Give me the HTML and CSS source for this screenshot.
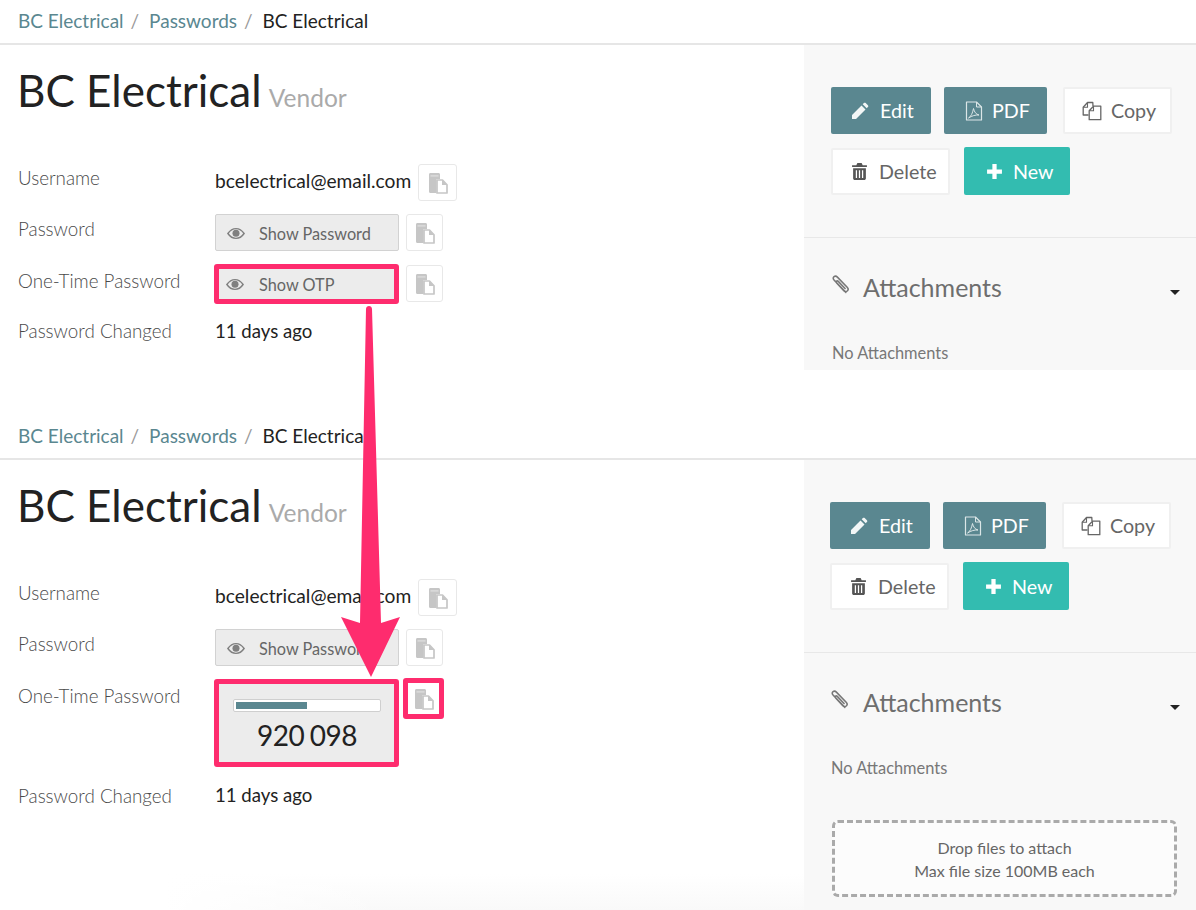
FILE: index.html
```html
<!DOCTYPE html>
<html lang="en">
<head>
<meta charset="utf-8">
<title>BC Electrical</title>
<link rel="stylesheet" href="styles.css">
</head>
<body>
<svg class="defs" width="0" height="0" aria-hidden="true">
  <symbol id="i-copydoc" viewBox="0 0 20 22">
    <path fill="#c6c6c6" d="M1 2.500c0-.8.6-1.500 1.400-1.500h8.200c.8 0 1.400.7 1.400 1.500V7H8.500v14H2.400C1.600 21 1 20.300 1 19.500z"/>
    <path fill="#dcdcdc" d="M2.500 3.200h8v1.400h-8z"/>
    <path fill="#fff" stroke="#c6c6c6" stroke-width="1.700" stroke-linejoin="round" d="M9 8h5.500l4.500 4.800V21H9z"/>
    <path fill="#c6c6c6" d="M14 8l5 5h-5z"/>
  </symbol>
  <symbol id="i-eye" viewBox="0 0 20 14">
    <path fill="none" stroke="#808080" stroke-width="1.600" d="M1 7c2.500-3.600 5.500-5.400 9-5.400S16.500 3.400 19 7c-2.500 3.600-5.500 5.400-9 5.400S3.500 10.600 1 7z"/>
    <circle cx="10" cy="6.600" r="3.900" fill="#808080"/>
  </symbol>
  <symbol id="i-pencil" viewBox="0 0 18 18">
    <path fill="#f2f6f6" d="M1 13l9.500-9.500 4 4L5 17H1zM11.700 2.300l1.200-1.200c.5-.5 1.300-.5 1.800 0l2.200 2.200c.5.500.5 1.300 0 1.800l-1.200 1.200z"/>
  </symbol>
  <symbol id="i-pdf" viewBox="0 0 18 20">
    <path fill="none" stroke="#dbe6e7" stroke-width="1.200" stroke-linejoin="round" d="M1.500 1h10l5 5v13h-15z"/>
    <path fill="none" stroke="#dbe6e7" stroke-width="1" d="M11.500 1v5h5M3.500 17c2.500-1.500 4-4.500 5-9.500.8 3.500 2.500 5.800 5.500 6.500-3.500-.3-7 .8-10.500 3z"/>
  </symbol>
  <symbol id="i-copy" viewBox="0 0 20 20">
    <path fill="none" stroke="#666" stroke-width="1.300" stroke-linejoin="round" d="M6.500 14H1.200V6.200L5.500 1.500h5.300L11 5"/>
    <path fill="#fff" stroke="#666" stroke-width="1.300" stroke-linejoin="round" d="M7.200 18.700V9.800L11.500 5.200h7.300v13.500z"/>
    <path fill="none" stroke="#666" stroke-width="1.100" d="M5.500 1.500v4.700H1.200M11.500 5.200v4.600H7.200"/>
  </symbol>
  <symbol id="i-trash" viewBox="0 0 14 16">
    <path fill="#555" d="M5 0h4l1 2h4v1.800H0V2h4zM1 5h12v9.500c0 .8-.7 1.500-1.500 1.500h-9C1.700 16 1 15.300 1 14.500zm2.500 1.800v7.400h1.200V6.800zm2.900 0v7.400h1.200V6.800zm2.900 0v7.400h1.200V6.800z"/>
  </symbol>
  <symbol id="i-plus" viewBox="0 0 16 16">
    <path fill="#fff" d="M6 1h4v5h5v4h-5v5H6v-5H1V6h5z"/>
  </symbol>
  <symbol id="i-clip" viewBox="0 0 18 19">
    <path fill="none" stroke="#777" stroke-width="1.500" stroke-linecap="round" d="M15 16.500L4 5c-1.500-1.500-1-2.800-.2-3.400.9-.7 2.100-.7 3.200.4l9.300 9.600c1 1 1.200 2.300.3 3.300-1 1-2.400 1-3.500-.1L6.300 7.600c-.6-.6-.6-1.300-.1-1.700.4-.4 1-.4 1.600.2l6.500 6.700"/>
  </symbol>
</svg>

<section class="shot shot-first">
  <nav class="crumbs">
    <a class="crumb-link">BC Electrical</a><span class="crumb-sep">/</span>
    <a class="crumb-link">Passwords</a><span class="crumb-sep">/</span>
    <span class="crumb-here">BC Electrical</span>
  </nav>
  <div class="shot-body">
    <main class="main">
      <h1 class="title">BC Electrical <small class="title-sub">Vendor</small></h1>
      <div class="field field-user">
        <div class="label">Username</div>
        <div class="value value-email">bcelectrical@email.com</div>
        <button class="copy copy-wide"><svg class="ic-doc"><use href="#i-copydoc"/></svg></button>
      </div>
      <div class="field">
        <div class="label">Password</div>
        <button class="reveal"><svg class="ic-eye"><use href="#i-eye"/></svg><span>Show Password</span></button>
        <button class="copy"><svg class="ic-doc"><use href="#i-copydoc"/></svg></button>
      </div>
      <div class="field">
        <div class="label label-otp">One-Time Password</div>
        <button class="reveal reveal-hl"><svg class="ic-eye"><use href="#i-eye"/></svg><span>Show OTP</span></button>
        <button class="copy"><svg class="ic-doc"><use href="#i-copydoc"/></svg></button>
      </div>
      <div class="field field-last">
        <div class="label">Password Changed</div>
        <div class="value">11 days ago</div>
      </div>
    </main>
    <aside class="side">
      <div class="actions">
        <div class="btn-row">
          <button class="btn btn-teal btn-edit"><svg class="ic-btn"><use href="#i-pencil"/></svg>Edit</button>
          <button class="btn btn-teal btn-pdf"><svg class="ic-btn"><use href="#i-pdf"/></svg>PDF</button>
          <button class="btn btn-white btn-copy"><svg class="ic-btn"><use href="#i-copy"/></svg>Copy</button>
        </div>
        <div class="btn-row">
          <button class="btn btn-white btn-del"><svg class="ic-btn ic-trash"><use href="#i-trash"/></svg>Delete</button>
          <button class="btn btn-new"><svg class="ic-btn ic-plus"><use href="#i-plus"/></svg>New</button>
        </div>
      </div>
      <div class="attach">
        <div class="attach-head">
          <svg class="ic-clip"><use href="#i-clip"/></svg>
          <h2 class="attach-title">Attachments</h2>
          <span class="caret"></span>
        </div>
        <p class="attach-none">No Attachments</p>
      </div>
    </aside>
  </div>
</section>

<section class="shot shot-second">
  <nav class="crumbs">
    <a class="crumb-link">BC Electrical</a><span class="crumb-sep">/</span>
    <a class="crumb-link">Passwords</a><span class="crumb-sep">/</span>
    <span class="crumb-here">BC Electrical</span>
  </nav>
  <div class="shot-body">
    <main class="main">
      <h1 class="title">BC Electrical <small class="title-sub">Vendor</small></h1>
      <div class="field field-user">
        <div class="label">Username</div>
        <div class="value value-email">bcelectrical@email.com</div>
        <button class="copy copy-wide"><svg class="ic-doc"><use href="#i-copydoc"/></svg></button>
      </div>
      <div class="field">
        <div class="label">Password</div>
        <button class="reveal"><svg class="ic-eye"><use href="#i-eye"/></svg><span>Show Password</span></button>
        <button class="copy"><svg class="ic-doc"><use href="#i-copydoc"/></svg></button>
      </div>
      <div class="field field-otp">
        <div class="label label-otp">One-Time Password</div>
        <div class="otp">
          <div class="otp-track"><div class="otp-fill" style="width:50%"></div></div>
          <div class="otp-code">920 098</div>
        </div>
        <button class="copy copy-hl"><svg class="ic-doc"><use href="#i-copydoc"/></svg></button>
      </div>
      <div class="field field-last">
        <div class="label">Password Changed</div>
        <div class="value">11 days ago</div>
      </div>
    </main>
    <aside class="side">
      <div class="actions">
        <div class="btn-row">
          <button class="btn btn-teal btn-edit"><svg class="ic-btn"><use href="#i-pencil"/></svg>Edit</button>
          <button class="btn btn-teal btn-pdf"><svg class="ic-btn"><use href="#i-pdf"/></svg>PDF</button>
          <button class="btn btn-white btn-copy"><svg class="ic-btn"><use href="#i-copy"/></svg>Copy</button>
        </div>
        <div class="btn-row">
          <button class="btn btn-white btn-del"><svg class="ic-btn ic-trash"><use href="#i-trash"/></svg>Delete</button>
          <button class="btn btn-new"><svg class="ic-btn ic-plus"><use href="#i-plus"/></svg>New</button>
        </div>
      </div>
      <div class="attach">
        <div class="attach-head">
          <svg class="ic-clip"><use href="#i-clip"/></svg>
          <h2 class="attach-title">Attachments</h2>
          <span class="caret"></span>
        </div>
        <p class="attach-none">No Attachments</p>
        <div class="drop">Drop files to attach<br>Max file size 100MB each</div>
      </div>
    </aside>
  </div>
</section>

<svg class="arrow" width="1196" height="910" viewBox="0 0 1196 910" aria-hidden="true">
  <path fill="#fe2c6e" d="M366 309c0-4 6-4 6 0L381 623L400 617L371 677L341 617L360 623z"/>
</svg>
</body>
</html>
```

FILE: styles.css
```css
* { box-sizing: border-box; }
html, body { margin: 0; padding: 0; }
body {
  position: relative;
  width: 1196px;
  height: 910px;
  overflow: hidden;
  background: #fff;
  font-family: "Lato", "Liberation Sans", sans-serif;
  color: #222;
}
.defs { position: absolute; }
.shot { display: flex; flex-direction: column; }
.shot-first { height: 370px; }
.shot-second { height: 495px; margin-top: 45px; }

.crumbs {
  flex: none;
  height: 45px;
  padding: 9px 0 0 18px;
  border-bottom: 2px solid #e6e6e6;
  font-size: 19px;
  line-height: 24px;
  white-space: nowrap;
}
.crumb-link { color: #5a8790; }
.crumb-sep { color: #999; margin: 0 5px 0 7px; }
.crumb-here { color: #222; }

.shot-body { flex: 1; display: flex; min-height: 0; }
.main { flex: 1; padding: 0 0 0 18px; min-width: 0; }
.shot-second .main {
  background:
    linear-gradient(to right, #fff, rgba(255, 255, 255, 0) 35%) right bottom / 640px 36px no-repeat,
    linear-gradient(to bottom, #fff, #f9f9f9) right bottom / 640px 36px no-repeat;
}
.title {
  margin: 0 0 0 -1px;
  padding-top: 16px;
  height: 119px;
  font-size: 44px;
  line-height: 58px;
  font-weight: 400;
  color: #222;
  white-space: nowrap;
}
.title-sub { font-size: 24.5px; color: #aaa; font-weight: 400; margin-left: -4px; }

.field { display: flex; align-items: flex-start; height: 37px; margin-bottom: 14px; }
.field-user { height: 37px; margin-bottom: 13px; }
.field-otp { height: 93px; margin-bottom: 5px; margin-top: -1px; }
.field-last { height: 30px; margin-bottom: 0; }
.label {
  flex: none;
  width: 197px;
  font-size: 18.800px;
  line-height: 24px;
  color: #4a4a4a;
  font-weight: 300;
  padding-top: 3px;
  white-space: nowrap;
}
.field-user > .label { padding-top: 2px; }
.label-otp { padding-top: 4px; }
.field-otp > .label-otp { padding-top: 5px; }
.value { font-size: 18.600px; line-height: 24px; color: #222; padding-top: 3px; white-space: nowrap; }
.value-email { font-size: 19.200px; padding-top: 5px; }
.field-otp + .field-last > .label { padding-top: 7px; }
.field-otp + .field-last > .value { padding-top: 6px; }

.copy {
  width: 37px;
  height: 37px;
  margin-left: 7px;
  padding: 0;
  background: #fff;
  border: 1px solid #e8e8e8;
  border-radius: 3px;
  display: flex;
  align-items: center;
  justify-content: center;
  flex: none;
}
.copy-wide { width: 39px; margin-left: 7px; }
.copy-hl {
  width: 41px;
  height: 41px;
  margin-left: 4px;
  margin-top: -1px;
  border: 5px solid #fe2c6e;
}
.ic-doc { width: 20px; height: 22px; }

.reveal {
  flex: none;
  width: 184px;
  height: 37px;
  padding: 1px 0 0 11px;
  display: flex;
  align-items: center;
  background: #ececec;
  border: 1px solid #d2d2d2;
  border-radius: 2px;
  font-family: inherit;
  font-size: 16.300px;
  color: #666;
  text-align: left;
}
.ic-eye { width: 18px; height: 13px; margin-right: 14px; flex: none; }
.reveal-hl {
  width: 185px;
  height: 40px;
  margin-left: -1px;
  margin-top: -1px;
  padding: 0 0 0 7px;
  border: 5px solid #fe2c6e;
  border-radius: 3px;
}
.reveal-hl .ic-eye { margin-right: 15px; }
.reveal-hl + .copy { margin-left: 7px; }

.otp {
  flex: none;
  width: 185px;
  height: 88px;
  margin-left: -1px;
  padding: 15px 13px 0 14px;
  background: #ececec;
  border: 5px solid #fe2c6e;
  border-radius: 3px;
  text-align: center;
}
.otp-track {
  height: 13px;
  padding: 2px;
  background: #fff;
  border: 1px solid #cfcfcf;
  border-radius: 2px;
}
.otp-fill { height: 100%; background: #5a8790; }
.otp-code { font-size: 28px; line-height: 38px; color: #222; margin-top: 4px; word-spacing: -1px; letter-spacing: -.5px; }

.side { flex: none; width: 392px; background: #f8f8f8; padding: 0; }
.actions { height: 193px; padding: 42px 0 0 27px; border-bottom: 1px solid #e8e8e8; }
.shot-second .actions { padding-left: 26px; }
.btn-row { display: flex; align-items: center; margin-bottom: 13px; }
.btn {
  height: 47px;
  display: flex;
  align-items: center;
  padding: 0;
  border-radius: 2px;
  border: 0;
  font-family: inherit;
  font-size: 19.700px;
  white-space: nowrap;
}
.btn-teal { background: #5a8790; color: #fff; }
.btn-white { background: #fff; color: #666; border: 2px solid #f0f0f0; height: 47px; }
.btn-new { background: #33bcb0; color: #fff; height: 48px; }
.btn-edit { width: 100px; padding-left: 20px; margin-right: 13px; }
.btn-pdf { width: 103px; padding-left: 21px; margin-right: 16px; }
.btn-copy { width: 109px; padding-left: 17px; }
.btn-del { width: 119px; padding-left: 19px; margin-right: 14px; }
.btn-new { width: 106px; padding-left: 22px; }
.ic-btn { width: 18px; height: 18px; margin-right: 11px; flex: none; }
.btn-copy .ic-btn { width: 20px; height: 20px; margin-right: 9px; }
.btn-pdf .ic-btn { height: 20px; margin-right: 9px; }
.ic-trash { width: 15px; height: 17px; margin-right: 12px; }
.ic-plus { width: 17px; height: 17px; margin-right: 10px; }

.attach { padding: 0 16px 0 27px; }
.shot-second .attach { padding-left: 26px; }
.attach-head { display: flex; align-items: flex-start; height: 74px; padding-top: 33px; }
.ic-clip { width: 19px; height: 20px; flex: none; margin: 4px 14px 0 -1px; }
.shot-second .ic-clip { margin-right: 15px; }
.attach-title {
  margin: 0;
  font-size: 25px;
  line-height: 32px;
  font-weight: 400;
  color: #6e6e6e;
  flex: 1;
}
.caret {
  width: 0;
  height: 0;
  margin: 19px 0 0;
  border-left: 5px solid transparent;
  border-right: 5px solid transparent;
  border-top: 5px solid #222;
}
.attach-none { margin: 30px 0 0; font-size: 16.400px; line-height: 22px; color: #777; padding-left: 1px; }
.drop {
  width: 345px;
  height: 77px;
  margin: 41px 0 0 2px;
  padding-top: 13px;
  border: 3px dashed #aaa;
  border-radius: 6px;
  background: #fcfcfc;
  text-align: center;
  font-size: 16px;
  line-height: 23px;
  color: #666;
}

.arrow { position: absolute; left: 0; top: 0; pointer-events: none; }
```
